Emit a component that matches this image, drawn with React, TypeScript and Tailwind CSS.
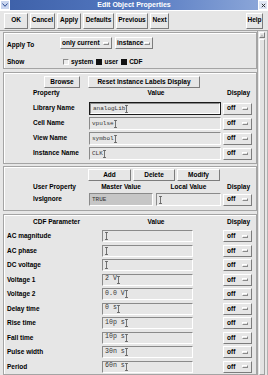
import React from "react";

const raised =
  "border border-t-white border-l-white border-b-[#7c7c7c] border-r-[#7c7c7c] bg-[#e6e6e6]";
const sunken =
  "border border-t-[#8a8a8a] border-l-[#8a8a8a] border-b-white border-r-white";

function IBeam() {
  return (
    <svg width="3" height="8" viewBox="0 0 3 8" className="shrink-0">
      <path d="M0 0.5h3M1.5 0.5v7M0 7.5h3" stroke="#555" strokeWidth="0.8" fill="none" />
    </svg>
  );
}

function Btn({ label, cls }: { label: string; cls: string }) {
  return (
    <div className={`flex items-center justify-center text-[6.5px] font-bold leading-none ${raised} ${cls}`}>
      {label}
    </div>
  );
}

function Off() {
  return (
    <div className={`w-[29px] h-[12px] shrink-0 flex items-center pl-[3px] ${raised}`}>
      <span className="text-[6.5px] font-bold leading-none">off</span>
      <span className="ml-auto mr-[3px] w-[6px] h-[3px] border border-t-white border-l-white border-b-[#8a8a8a] border-r-[#8a8a8a]" />
    </div>
  );
}

function Field({ text, cls, focus, big }: { text: string; cls: string; focus?: boolean; big?: boolean }) {
  const inner = (
    <div className={`h-full w-full flex items-center pl-[2px] ${sunken}`}>
      {text ? (
        <span
          className={`font-['Liberation_Mono',monospace] leading-none text-[#333] whitespace-pre ${
            big ? "text-[6.6px]" : "text-[6px]"
          }`}
        >
          {text}
        </span>
      ) : null}
      <IBeam />
    </div>
  );
  if (focus) {
    return <div className={`border border-[#1a1a1a] ${cls}`}>{inner}</div>;
  }
  return <div className={cls}>{inner}</div>;
}

function Check({ on }: { on: boolean }) {
  return on ? (
    <span className="w-[6px] h-[6px] bg-[#111] inline-block" />
  ) : (
    <span className={`w-[6px] h-[6px] inline-block bg-[#ececec] ${sunken}`} />
  );
}

const frame =
  "w-[254px] ml-[3px] border border-[#a4a4a4] shadow-[inset_1px_1px_0_#ffffff]";

export default function App() {
  const props = [
    { l: "Library Name", v: "analogLib", f: true },
    { l: "Cell Name", v: "vpulse" },
    { l: "View Name", v: "symbol" },
    { l: "Instance Name", v: "CLK" },
  ];
  const cdf = [
    ["AC magnitude", ""],
    ["AC phase", ""],
    ["DC voltage", ""],
    ["Voltage 1", "2 V"],
    ["Voltage 2", "0.0 V"],
    ["Delay time", "0 s"],
    ["Rise time", "10p s"],
    ["Fall time", "10p s"],
    ["Pulse width", "30n s"],
    ["Period", "60n s"],
  ];
  return (
    <div className="w-[268px] h-[375px] overflow-hidden bg-[#e6e6e6] font-['Liberation_Sans',Arial,sans-serif] text-black flex flex-col">
      {/* title bar */}
      <div className="h-[10px] shrink-0 flex bg-linear-to-r from-[#3d60a8] via-[#5478c0] to-[#8fa9da]">
        <div className="w-[10px] h-[10px] bg-[#c9d5ee] border border-white flex items-center justify-center">
          <svg width="6" height="4" viewBox="0 0 6 4">
            <path d="M0.5 0.5L3 3.3L5.5 0.5" stroke="#2a4a90" strokeWidth="1" fill="none" />
          </svg>
        </div>
        <div className="flex-1 text-center text-white font-bold text-[7px] leading-[10px]">
          Edit Object Properties
        </div>
        <div className="w-[10px] h-[10px] bg-[#dfe6f4] border border-white flex items-center justify-center">
          <svg width="5" height="5" viewBox="0 0 5 5">
            <path d="M0.8 0.8L4.2 4.2M4.2 0.8L0.8 4.2" stroke="#333" strokeWidth="1" />
          </svg>
        </div>
      </div>
      {/* button bar */}
      <div className="h-[21px] shrink-0 flex items-center pl-[4px] gap-[2px] border-t border-t-white border-b border-b-[#a4a4a4]">
        <Btn label="OK" cls="w-[24px] h-[16px]" />
        <Btn label="Cancel" cls="w-[25px] h-[16px]" />
        <Btn label="Apply" cls="w-[24px] h-[16px]" />
        <Btn label="Defaults" cls="w-[31px] h-[16px]" />
        <Btn label="Previous" cls="w-[32px] h-[16px]" />
        <Btn label="Next" cls="w-[19px] h-[16px]" />
        <Btn label="Help" cls="w-[17px] h-[16px] ml-auto mr-[5px]" />
      </div>
      <div className="flex-1 flex min-h-0">
        <div className="w-[257px] pt-[1px] flex flex-col gap-[2px]">
          {/* Apply To frame */}
          <div className={`${frame} h-[38px] pl-[3px]`}>
            <div className="flex items-end h-[13px] mt-[3px]">
              <span className="w-[53px] text-[6.5px] font-bold leading-[8px]">Apply To</span>
              <div className={`w-[52px] h-[12px] flex items-center pl-[1px] ${raised}`}>
                <span className="text-[6.5px] font-bold leading-none">only current</span>
                <span className="ml-auto mr-[2px] w-[6px] h-[3px] border border-t-white border-l-white border-b-[#8a8a8a] border-r-[#8a8a8a]" />
              </div>
              <div className={`w-[38px] h-[12px] ml-[3px] flex items-center pl-[1px] ${raised}`}>
                <span className="text-[6.5px] font-bold leading-none">instance</span>
                <span className="ml-auto mr-[2px] w-[6px] h-[3px] border border-t-white border-l-white border-b-[#8a8a8a] border-r-[#8a8a8a]" />
              </div>
            </div>
            <div className="flex items-center h-[10px] mt-[8px] text-[6.5px] font-bold leading-none">
              <span className="w-[56px]">Show</span>
              <Check on={false} />
              <span className="ml-[2px]">system</span>
              <span className="ml-[3px]" />
              <Check on={true} />
              <span className="ml-[2px]">user</span>
              <span className="ml-[3px]" />
              <Check on={true} />
              <span className="ml-[2px]">CDF</span>
            </div>
          </div>
          {/* Properties frame */}
          <div className={`${frame} pt-[3px] pb-[2px] mt-[1px]`}>
            <div className="flex h-[12px] pl-[40px]">
              <Btn label="Browse" cls="w-[36px] h-[12px]" />
              <Btn label="Reset Instance Labels Display" cls="w-[112px] h-[12px] ml-[8px]" />
            </div>
            <div className="flex items-center h-[10px] pl-[29px] text-[6.5px] font-bold leading-none">
              <span className="w-[56px]">Property</span>
              <span className="w-[134px] text-center">Value</span>
              <span className="w-[29px] text-center pl-[2px]">Display</span>
            </div>
            <div className="mt-[3px] flex flex-col">
              {props.map((p) => (
                <div key={p.l} className="flex items-center h-[15px] pl-[29px]">
                  <span className="w-[56px] text-[6.5px] font-bold leading-none">{p.l}</span>
                  <Field text={p.v} cls="w-[132px] h-[13px]" focus={p.f} />
                  <span className="ml-[2px]" />
                  <Off />
                </div>
              ))}
            </div>
          </div>
          {/* User property frame */}
          <div className={`${frame} pt-[2px] pb-[3px]`}>
            <div className="flex h-[12px] pl-[84px] gap-[2px]">
              <Btn label="Add" cls="w-[43px] h-[12px]" />
              <Btn label="Delete" cls="w-[42px] h-[12px]" />
              <Btn label="Modify" cls="w-[43px] h-[12px]" />
            </div>
            <div className="flex items-center h-[10px] mt-[1px] pl-[29px] text-[6.5px] font-bold leading-none">
              <span className="w-[56px]">User Property</span>
              <span className="w-[64px] text-center">Master Value</span>
              <span className="w-[65px] ml-[3px] text-center">Local Value</span>
              <span className="w-[29px] ml-[2px] text-center pl-[2px]">Display</span>
            </div>
            <div className="flex items-center h-[15px] pl-[29px]">
              <span className="w-[56px] text-[6.5px] font-bold leading-none">lvsIgnore</span>
              <div className={`w-[64px] h-[13px] flex items-center pl-[2px] bg-[#c6c6c6] ${sunken}`}>
                <span className="font-['Liberation_Mono',monospace] text-[6px] leading-none text-[#333]">TRUE</span>
              </div>
              <Field text="" cls="w-[65px] h-[13px] ml-[3px]" />
              <span className="ml-[2px]" />
              <Off />
            </div>
          </div>
          {/* CDF frame */}
          <div className={`${frame} mt-[1px]`}>
            <div className="flex items-center h-[14px] pl-[29px] text-[6.5px] font-bold leading-none">
              <span className="w-[56px] whitespace-nowrap">CDF Parameter</span>
              <span className="w-[134px] text-center">Value</span>
              <span className="w-[29px] text-center pl-[2px]">Display</span>
            </div>
            {cdf.map(([l, v]) => (
              <div key={l} className="flex items-center h-[14.5px] pl-[3px]">
                <span className="w-[95px] text-[6.5px] font-bold leading-none">{l}</span>
                <Field text={v} cls="w-[91px] h-[12px]" big />
                <span className="ml-[30px]" />
                <Off />
              </div>
            ))}
          </div>
        </div>
        {/* scrollbar */}
        <div className="w-[11px] border-l border-l-[#a4a4a4] flex flex-col pt-[1px] pl-[1px] pr-[2px] border-r border-r-[#b0b0b0]">
          <div className={`h-[6px] w-full flex items-center justify-center ${raised}`}>
            <svg width="5" height="3" viewBox="0 0 5 3">
              <path d="M0 3L2.5 0L5 3Z" fill="#bcbcbc" />
            </svg>
          </div>
          <div className="flex-1 mt-[1px] border border-t-white border-l-white border-b-[#a0a0a0] border-r-[#a0a0a0] bg-[#e3e3e3]" />
        </div>
      </div>
    </div>
  );
}
